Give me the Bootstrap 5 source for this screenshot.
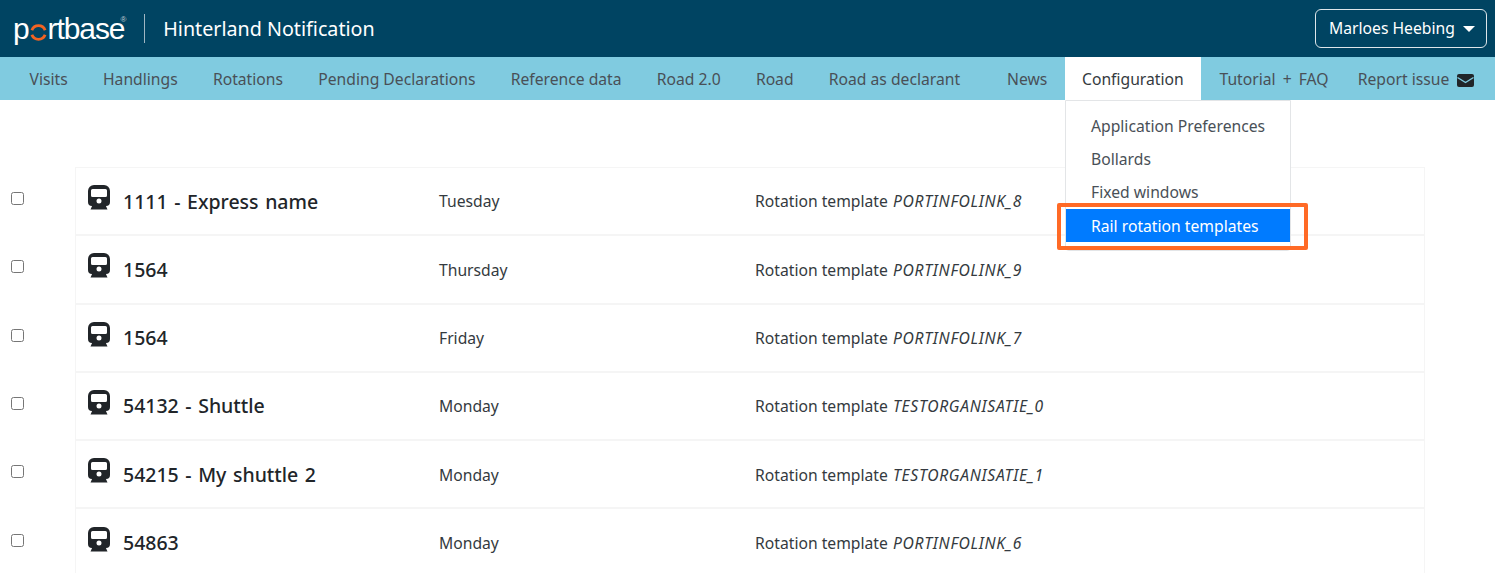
<!DOCTYPE html>
<html lang="en">
  <head>
    <meta charset="UTF-8" />
    <title>Hinterland Notification</title>
    <link href="https://cdn.jsdelivr.net/npm/bootstrap@5.3.3/dist/css/bootstrap.min.css" rel="stylesheet" />
    <style>
      body { font-family: "Noto Sans", "Open Sans", sans-serif; font-size: 15.7px; color: #212529; overflow: hidden; }
      .top-bar { height: 57px; background: #004462; padding: 0 8px 0 13px; }
      .logo { font-family: "Liberation Sans", sans-serif; font-size: 30px; letter-spacing: -1.100px; color: #fff; line-height: 1; white-space: nowrap; }
      .logo svg { margin: 0 1px; vertical-align: -2px; }
      .logo sup { font-size: 8px; top: -17px; color: #c4ccd2; letter-spacing: 0; margin-left: -4px; }
      .app-name { font-size: 19.7px; color: #fff; border-left: 1px solid #9fb6c2; margin-left: 18px; padding-left: 18px; line-height: 29px; }
      .user-btn { height: 39px; width: 172px; padding: 0 11px 0 13px; color: #fff; border: 1px solid #dee6ea; font-size: 15.7px; }
      .user-btn:hover { color: #fff; }
      .user-btn::after { border-top-width: .4em; border-left-width: .4em; border-right-width: .4em; }
      .menu-bar { height: 43px; background: #80cbe0; padding: 0 3px 0 12px; position: relative; }
      .menu-bar .nav-link { color: #495057; padding: 2px 17.6px 0; line-height: 41px; font-size: 15.7px; white-space: nowrap; }
      .menu-bar .nav-link.active { background: #fff; width: 136px; text-align: center; padding: 2px 0 0; color: #343a40; }
      .menu-bar .nav-link.tutorial-link { word-spacing: 3px; margin: 0 -6px 0 1px; }
      .config-menu { display: block; position: absolute; top: 43px; left: 1065px; width: 226px; margin: 0; padding: 9px 0 8px; border-radius: 0 0 4px 4px; border-color: #e3e5e7; }
      .config-menu .dropdown-item { padding: 0 25px; line-height: 33px; height: 33px; font-size: 15.7px; color: #495057; }
      .config-menu .dropdown-item.active { background: #007bff; color: #fff; line-height: 35px; }
      .callout { position: absolute; z-index: 1100; left: 1057px; top: 203px; width: 251px; height: 47px; border: 4px solid #ff6a26; border-radius: 2px; }
      .rail-list { padding-top: 67px; }
      .rail-row { height: 68.3px; }
      .check-cell { width: 75px; padding-left: 11px; }
      .check-cell input { width: 13px; height: 13px; display: block; margin-top: -5px; }
      .rail-card { width: 1350px; height: 100%; border: 1px solid #f5f5f5; padding: 0 12px; }
      .rail-name { width: 351px; font-size: 19.5px; font-weight: 500; word-spacing: 1.5px; color: #212529; }
      .rail-name svg { margin-right: 13px; margin-top: -7px; }
      .rail-day { width: 316px; font-size: 15.7px; color: #343a40; padding-top: 2px; }
      .rail-template { font-size: 15.7px; color: #343a40; padding-top: 2px; }
      .rail-template em { letter-spacing: .7px; margin-left: 1px; }
    </style>
  </head>
  <body>
    <header class="top-bar d-flex align-items-center justify-content-between">
      <div class="d-flex align-items-center">
        <span class="logo">p<svg width="17" height="17" viewBox="0 0 18 18"><path d="M2 6.500A7.500 7.500 0 0 1 16 6.500M2 11.500A7.500 7.500 0 0 0 16 11.500" fill="none" stroke="#f26322" stroke-width="3"/></svg>rtbase<sup>®</sup></span>
        <span class="app-name">Hinterland Notification</span>
      </div>
      <button type="button" class="btn user-btn dropdown-toggle d-flex align-items-center justify-content-between">Marloes Heebing</button>
    </header>

    <nav class="menu-bar d-flex">
      <a class="nav-link" href="#">Visits</a>
      <a class="nav-link" href="#">Handlings</a>
      <a class="nav-link" href="#">Rotations</a>
      <a class="nav-link" href="#">Pending Declarations</a>
      <a class="nav-link" href="#">Reference data</a>
      <a class="nav-link" href="#">Road 2.0</a>
      <a class="nav-link" href="#">Road</a>
      <a class="nav-link" href="#">Road as declarant</a>
      <a class="nav-link ms-auto" href="#">News</a>
      <a class="nav-link active" href="#">Configuration</a>
      <a class="nav-link tutorial-link" href="#">Tutorial + FAQ</a>
      <a class="nav-link" href="#">Report issue
        <svg width="17" height="13" viewBox="0 0 17 13" class="ms-1"><rect width="17" height="13" rx="2" fill="#212529"/><path d="M0.500 3.500 L8.500 8.500 L16.500 3.500" fill="none" stroke="#80cbe0" stroke-width="1.400"/></svg>
      </a>
      <ul class="dropdown-menu config-menu">
        <li><a class="dropdown-item" href="#">Application Preferences</a></li>
        <li><a class="dropdown-item" href="#">Bollards</a></li>
        <li><a class="dropdown-item" href="#">Fixed windows</a></li>
        <li><a class="dropdown-item active" href="#">Rail rotation templates</a></li>
      </ul>
    </nav>
    <div class="callout"></div>

    <main class="rail-list" id="rows"></main>

    <script>
      const rows = [
        ["1111 - Express name", "Tuesday", "PORTINFOLINK_8"],
        ["1564", "Thursday", "PORTINFOLINK_9"],
        ["1564", "Friday", "PORTINFOLINK_7"],
        ["54132 - Shuttle", "Monday", "TESTORGANISATIE_0"],
        ["54215 - My shuttle 2", "Monday", "TESTORGANISATIE_1"],
        ["54863", "Monday", "PORTINFOLINK_6"]
      ];
      const train = '<svg width="22" height="25" viewBox="0 0 22 25"><path fill="#212529" fill-rule="evenodd" d="M6 0h10a6 6 0 0 1 6 6v11a4 4 0 0 1-4 4H4a4 4 0 0 1-4-4V6a6 6 0 0 1 6-6zM4.500 4A1.500 1.500 0 0 0 3 5.500V10.500A1.500 1.500 0 0 0 4.500 12h13a1.500 1.500 0 0 0 1.500-1.500V5.500A1.500 1.500 0 0 0 17.500 4zM11 13.500a2.500 2.500 0 1 0 0 5a2.500 2.500 0 0 0 0-5z"/><path fill="#212529" d="M4.500 20h13l2 4.500H2.500z"/></svg>';
      document.getElementById("rows").innerHTML = rows.map(r => `
        <div class="rail-row d-flex align-items-center">
          <div class="check-cell"><input type="checkbox" class="d-block"></div>
          <div class="rail-card d-flex align-items-center">
            <div class="rail-name d-flex align-items-center">${train}<span>${r[0]}</span></div>
            <div class="rail-day">${r[1]}</div>
            <div class="rail-template">Rotation template <em>${r[2]}</em></div>
          </div>
        </div>`).join("");
    </script>
    <script src="https://cdn.jsdelivr.net/npm/bootstrap@5.3.3/dist/js/bootstrap.bundle.min.js"></script>
  </body>
</html>
